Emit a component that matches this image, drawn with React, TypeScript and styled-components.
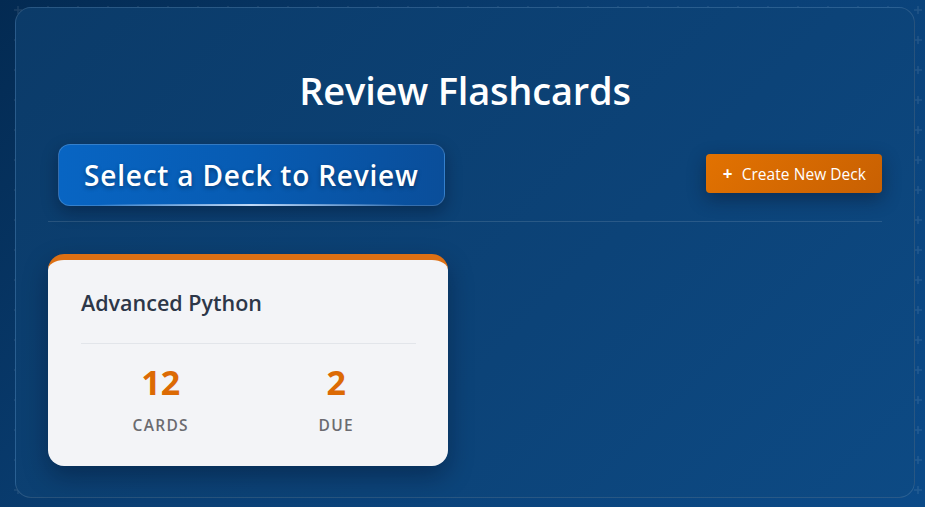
import styled, { createGlobalStyle } from 'styled-components';

const plus = encodeURIComponent(
  '<svg xmlns="http://www.w3.org/2000/svg" width="30" height="30"><path d="M14 3v8M10 7h8" stroke="rgba(255,255,255,0.09)" stroke-width="1.5"/></svg>'
);

const GlobalStyle = createGlobalStyle`
  html, body {
    margin: 0;
    min-height: 100%;
  }
  body {
    height: 507px;
    overflow: hidden;
    font-family: "Open Sans", "Noto Sans", sans-serif;
    background-color: #063463;
    background-image: url("data:image/svg+xml,${plus}"),
      linear-gradient(135deg, #032a52 0%, #0a3f74 45%, #0b4a88 100%);
    background-position: 4px 3px, 0 0;
  }
`;

const Page = styled.div`
  padding: 7px 10px 8px 15px;
`;

const Panel = styled.main`
  height: 491px;
  box-sizing: border-box;
  border: 1px solid rgba(255, 255, 255, 0.12);
  border-radius: 16px;
  background: linear-gradient(135deg, #0b3b69 0%, #0c4378 60%, #0d4a84 100%);
  padding: 51px 32px 32px 32px;
`;

const Title = styled.h1`
  margin: 0;
  text-align: center;
  color: #fff;
  font-size: 38px;
  font-weight: 600;
  letter-spacing: -0.2px;
  line-height: 62px;
`;

const Toolbar = styled.div`
  display: flex;
  align-items: center;
  justify-content: space-between;
  margin-top: 23px;
  padding: 0 0 15px 10px;
  border-bottom: 1px solid rgba(255, 255, 255, 0.12);
`;

const DeckHeading = styled.h2`
  position: relative;
  margin: 0;
  height: 62px;
  box-sizing: border-box;
  padding: 0 25px;
  display: flex;
  align-items: center;
  border-radius: 12px;
  border: 1px solid rgba(255, 255, 255, 0.18);
  background: linear-gradient(90deg, #0865c3 0%, #075bb2 50%, #0a4e9a 100%);
  box-shadow: 0 6px 16px rgba(0, 10, 30, 0.35);
  color: #fff;
  font-size: 28px;
  font-weight: 600;
  letter-spacing: 0.8px;
  text-shadow: 0 2px 4px rgba(0, 0, 0, 0.35);
  &::after {
    content: '';
    position: absolute;
    left: 10%;
    right: 10%;
    bottom: -1px;
    height: 2px;
    background: linear-gradient(90deg, transparent, rgba(210, 230, 255, 0.9), transparent);
  }
`;

const CreateButton = styled.button`
  display: flex;
  align-items: center;
  gap: 9px;
  height: 39px;
  margin-bottom: 3px;
  padding: 0 16px 0 17px;
  border: none;
  border-radius: 4px;
  background: linear-gradient(135deg, #e27201 0%, #c86002 100%);
  box-shadow: 0 6px 18px rgba(10, 20, 40, 0.45);
  color: #fff;
  font-family: inherit;
  font-size: 15.5px;
  letter-spacing: 0.05px;
  cursor: pointer;
`;

const PlusSign = styled.span`
  font-size: 17px;
  font-weight: 700;
  line-height: 1;
`;

const DeckGrid = styled.div`
  display: grid;
  grid-template-columns: repeat(auto-fill, 400px);
  gap: 24px;
  margin-top: 32px;
`;

const DeckCard = styled.article`
  background: #f3f4f7;
  border-radius: 16px;
  border-top: 6px solid #dd7014;
  padding: 29px 32px 30px 33px;
  box-shadow: 0 10px 24px rgba(0, 10, 30, 0.35);
`;

const DeckName = styled.h3`
  margin: 0;
  color: #2d3748;
  font-size: 21.5px;
  font-weight: 600;
  line-height: 28px;
  padding-bottom: 26px;
  border-bottom: 1px solid #e2e5ea;
`;

const Stats = styled.div`
  display: grid;
  grid-template-columns: 1fr 1fr;
  gap: 16px;
  margin-top: 16px;
`;

const Stat = styled.div`
  display: flex;
  flex-direction: column;
  align-items: center;
`;

const StatValue = styled.span`
  color: #dc6a04;
  font-size: 34px;
  font-weight: 700;
  line-height: 44px;
`;

const StatLabel = styled.span`
  margin-top: 10px;
  color: #6b6b70;
  font-size: 15.5px;
  font-weight: 600;
  letter-spacing: 1.3px;
`;

const decks = [{ name: 'Advanced Python', cards: 12, due: 2 }];

function App() {
  return (
    <Page>
      <GlobalStyle />
      <Panel>
        <Title>Review Flashcards</Title>
        <Toolbar>
          <DeckHeading>Select a Deck to Review</DeckHeading>
          <CreateButton>
            <PlusSign>+</PlusSign> Create New Deck
          </CreateButton>
        </Toolbar>
        <DeckGrid>
          {decks.map((d) => (
            <DeckCard key={d.name}>
              <DeckName>{d.name}</DeckName>
              <Stats>
                <Stat>
                  <StatValue>{d.cards}</StatValue>
                  <StatLabel>CARDS</StatLabel>
                </Stat>
                <Stat>
                  <StatValue>{d.due}</StatValue>
                  <StatLabel>DUE</StatLabel>
                </Stat>
              </Stats>
            </DeckCard>
          ))}
        </DeckGrid>
      </Panel>
    </Page>
  );
}

export default App;
